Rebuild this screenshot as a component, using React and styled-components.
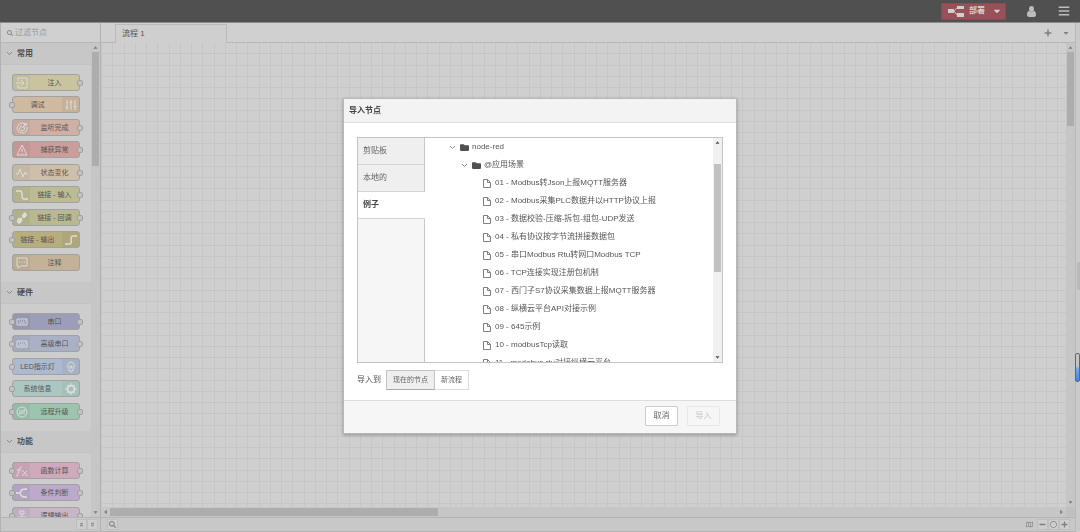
import React from "react";
import styled, { createGlobalStyle } from "styled-components";
import {
  FaAngleDoubleDown,
  FaAngleDoubleUp,
  FaBars,
  FaCaretDown,
  FaFolder,
  FaMinus,
  FaPlus,
  FaRegCircle,
  FaRegMap,
  FaSearch,
} from "react-icons/fa";

const GlobalStyle = createGlobalStyle`
  * {
    box-sizing: border-box;
  }

  body {
    margin: 0;
    overflow: hidden;
  }

  body,
  button,
  input {
    font-family: "Liberation Sans", "Noto Sans CJK SC", sans-serif;
    font-size: 8px;
    line-height: 12px;
    color: #555;
  }

  button,
  input {
    margin: 0;
    padding: 0;
    border: 0;
    background: none;
  }
`;

const Page = styled.div`
  display: flex;
  flex-direction: column;
  height: 100vh;
  background: #c8c8c8;
`;

const Header = styled.header`
  display: flex;
  align-items: center;
  justify-content: flex-end;
  flex: none;
  height: 23px;
  padding-right: 10px;
  background: #505050;
  border-bottom: 1px solid #8c8c8c;
`;

const DeployButton = styled.button`
  display: flex;
  align-items: center;
  width: 65px;
  height: 17px;
  padding: 0 3px 0 6px;
  background: #985059;
  border: 1px solid #8a4a52;
  border-radius: 1px;
  color: #cfcfcf;
  font-weight: bold;

  span {
    flex: 1;
    padding-left: 5px;
    text-align: left;
  }
`;

const HeaderButton = styled.button`
  display: flex;
  justify-content: center;
  width: 12px;
  margin-left: ${(props) => props.$gap || 20}px;
  color: #bdbdbd;
  font-size: 12px;
`;

const Main = styled.div`
  display: flex;
  flex: 1;
  min-height: 0;
`;

const Palette = styled.aside`
  display: flex;
  flex-direction: column;
  flex: none;
  width: 101px;
  border-left: 1px solid #b2b2b2;
  border-right: 1px solid #b2b2b2;
  background: #cdcdcd;
`;

const SearchBox = styled.label`
  display: flex;
  align-items: center;
  gap: 2px;
  flex: none;
  height: 20px;
  padding-left: 6px;
  border-bottom: 1px solid #b8b8b8;
  background: #d0d0d0;
  color: #888;
  font-size: 6px;

  input {
    width: 70px;
    height: 16px;
    outline: 0;
  }

  input::placeholder {
    color: #9a9a9a;
  }
`;

const PaletteScroll = styled.div`
  display: flex;
  flex: 1;
  min-height: 0;
`;

const Categories = styled.div`
  flex: 1;
  overflow: hidden;
`;

const CategoryHeader = styled.button`
  display: flex;
  align-items: center;
  gap: 4px;
  width: 100%;
  height: 22px;
  padding-left: 5px;
  background: #c7c7c7;
  border-bottom: 1px solid #c2c2c2;
  font-weight: ${(props) => (props.$bold ? "bold" : "500")};
  color: #505050;
`;

const NodeList = styled.ul`
  margin: 0;
  padding: 9px 11px 6px;
  list-style: none;
`;

const NodeRow = styled.li`
  height: 22px;

  &:nth-child(even) {
    height: 23px;
  }
`;

const PaletteNode = styled.div`
  position: relative;
  display: flex;
  flex-direction: ${(props) => (props.$iconRight ? "row-reverse" : "row")};
  height: 17px;
  border: 1px solid #a2a2a2;
  border-radius: 3px;
  background: ${(props) => props.$color};
  font-size: 7px;
  line-height: 15px;
  color: #555;

  span {
    flex: 1;
    text-align: center;
    white-space: nowrap;
  }
`;

const NodeIcon = styled.div`
  display: flex;
  align-items: center;
  justify-content: center;
  width: 17px;
  background: rgba(0, 0, 0, 0.04);
`;

const Port = styled.i`
  position: absolute;
  top: 5px;
  left: ${(props) => (props.$right ? "auto" : "-4px")};
  right: ${(props) => (props.$right ? "-4px" : "auto")};
  width: 6px;
  height: 6px;
  border: 1px solid #a0a0a0;
  border-radius: 2px;
  background: #c2c2c2;
`;

const Workspace = styled.main`
  display: flex;
  flex-direction: column;
  flex: 1;
  min-width: 0;
`;

const TabBar = styled.div`
  display: flex;
  align-items: flex-end;
  flex: none;
  height: 20px;
  padding-left: 14px;
  padding-right: 5px;
  border-bottom: 1px solid #b8b8b8;
  background: #d0d0d0;
`;

const FlowTab = styled.button`
  width: 112px;
  height: 19px;
  margin-bottom: -1px;
  padding-left: 6px;
  border: 1px solid #bababa;
  border-bottom: 0;
  background: #cfcfcf;
  text-align: left;
  color: #555;
`;

const TabTools = styled.div`
  display: flex;
  align-items: center;
  gap: 10px;
  height: 19px;
  margin-left: auto;

  button {
    display: flex;
    color: #808080;
  }
`;

const CanvasRow = styled.div`
  display: flex;
  flex: 1;
  min-height: 0;
`;

const line = "#c6c6c6";
const steps = `${line} 0 1px, transparent 1px 11px, ${line} 11px 12px, transparent 12px 23px,
  ${line} 23px 24px, transparent 24px 34px, ${line} 34px 35px, transparent 35px 45px`;

const Canvas = styled.div`
  flex: 1;
  background-color: #cfcfcf;
  background-image: linear-gradient(to right, ${steps}),
    linear-gradient(to bottom, ${steps});
  background-size: 45px 45px;
  background-position: 0 -1px;
`;

const HorizontalScroll = styled.div`
  flex: none;
  padding-right: 9px;
  background: #c0c0c0;
`;

const Track = styled.div`
  display: flex;
  flex: none;
  flex-direction: ${(props) => (props.$horizontal ? "row" : "column")};
  align-items: stretch;
  ${(props) => (props.$horizontal ? "height: 10px" : "width: 9px")};
  padding: ${(props) => (props.$horizontal ? "1px 0" : "0 1px")};
  background: ${(props) => (props.$light ? "#f1f1f1" : "#c6c6c6")};
  color: ${(props) => (props.$light ? "#505050" : "#7a7a7a")};
`;

const Arrow = styled.svg`
  flex: none;
  width: ${(props) => (props.$horizontal ? "9px" : "7px")};
  height: ${(props) => (props.$horizontal ? "8px" : "9px")};
  fill: currentColor;
`;

const Thumb = styled.div`
  flex: none;
  ${(props) => (props.$horizontal ? "width" : "height")}: ${(props) => props.$size}%;
  margin: ${(props) =>
    props.$horizontal ? "0 auto 0 0" : `${props.$start || 0}px 0 auto`};
  background: ${(props) => (props.$light ? "#c1c1c1" : "#adadad")};
`;

const Footer = styled.div`
  display: flex;
  align-items: center;
  justify-content: ${(props) => (props.$end ? "flex-end" : "space-between")};
  flex: none;
  height: 15px;
  padding: ${(props) => (props.$end ? "0 2px" : "0 5px 0 6px")};
  border-top: 1px solid #b4b4b4;
  border-bottom: 1px solid #b4b4b4;
  background: #c8c8c8;
`;

const FooterGroup = styled.div`
  display: flex;
  align-items: center;
  gap: ${(props) => props.$gap || 0}px;
`;

const FooterButton = styled.button`
  display: flex;
  align-items: center;
  justify-content: center;
  width: 11px;
  height: 11px;
  border: 1px solid ${(props) => (props.$plain ? "transparent" : "#bebebe")};
  background: ${(props) => (props.$plain ? "none" : "#cecece")};
  color: #808080;
  font-size: ${(props) => (props.$small ? 5 : 7)}px;
`;

const Separator = styled.div`
  display: flex;
  flex-direction: column;
  align-items: flex-end;
  gap: 63px;
  flex: none;
  width: 5px;
  padding-top: 239px;
  border-left: 1px solid #b9b9b9;
  background: #cacaca;
`;

const Grip = styled.div`
  width: 3px;
  height: 28px;
  border-radius: 1px;
  background: #b9b9b9;
`;

const ScrollPill = styled.div`
  width: 5px;
  height: 29px;
  border: 1px solid #666;
  border-radius: 2px;
  background: linear-gradient(#c4c4c4 45%, #6fa9ea 55%, #3f83ea);
`;

const Shade = styled.div`
  position: fixed;
  inset: 0;
  display: flex;
  align-items: center;
  justify-content: center;
`;

const Dialog = styled.section`
  width: 394px;
  border: 1px solid #b8b8b8;
  background: #fff;
  box-shadow: 0 1px 3px rgba(0, 0, 0, 0.3);
`;

const DialogTitle = styled.h1`
  margin: 0;
  padding: 5px;
  border-bottom: 1px solid #ddd;
  background: #f3f3f3;
  font-size: 8px;
  line-height: 13px;
  color: #444;
`;

const DialogBody = styled.div`
  padding: 14px 13px 10px;
`;

const ImportPanel = styled.div`
  display: flex;
  height: 226px;
  border: 1px solid #c4c4c4;
`;

const SourceTabs = styled.div`
  flex: none;
  width: 67px;
  border-right: 1px solid #c8c8c8;
  background: #f6f6f6;
`;

const SourceTab = styled.button`
  display: block;
  width: ${(props) => (props.$active ? "67px" : "66px")};
  height: 27px;
  padding-left: 5px;
  border-bottom: 1px solid #d4d4d4;
  background: ${(props) => (props.$active ? "#fff" : "#efefef")};
  text-align: left;
  font-weight: ${(props) => (props.$active ? "bold" : "normal")};
  color: ${(props) => (props.$active ? "#444" : "#666")};
`;

const Tree = styled.ul`
  flex: 1;
  margin: 0;
  padding: 0;
  overflow: hidden;
  list-style: none;
`;

const TreeRow = styled.li`
  display: flex;
  align-items: center;
  gap: 3px;
  height: 18px;
  padding-left: ${(props) => [24, 36, 47][props.$level]}px;
  white-space: nowrap;
`;

const Twisty = styled.span`
  display: flex;
  width: 8px;
`;

const TreeIcon = styled.span`
  display: flex;
  width: 9px;
  font-size: 9px;
  color: #505050;
`;

const ImportTarget = styled.div`
  display: flex;
  align-items: center;
  margin-top: 7px;
`;

const TargetButtons = styled.div`
  display: flex;
  margin-left: 5px;
`;

const TargetButton = styled.button`
  height: 20px;
  padding: 0 6px;
  border: 1px solid ${(props) => (props.$selected ? "#c4c4c4" : "#ddd")};
  border-bottom-color: ${(props) => (props.$selected ? "#aaa" : "#ddd")};
  border-left-width: ${(props) => (props.$selected ? "1px" : "0")};
  background: ${(props) => (props.$selected ? "#eee" : "#fff")};
  font-size: 7px;
  color: #666;
`;

const DialogFooter = styled.div`
  display: flex;
  justify-content: flex-end;
  gap: 9px;
  padding: 5px 16px 7px;
  border-top: 1px solid #ddd;
  background: #f6f6f6;
`;

const DialogButton = styled.button`
  width: 33px;
  height: 20px;
  border: 1px solid #ccc;
  border-radius: 1px;
  background: #fff;
  color: #666;

  &:disabled {
    border-color: #e8e8e8;
    background: #f6f6f6;
    color: #c4c4c4;
  }
`;

const glyphs = {
  inject: <path d="M2 4V1h9v10H2V8M0 6h7M5 3l3 3-3 3" />,
  debug: <path d="M2 1v6M2 10v1M6 1v1M6 5v6M10 1v5M10 9v2M1 8h2v1H1zM5 3h2v1H5zM9 7h2v1H9z" />,
  complete: (
    <path d="M9 2a5 5 0 1 0 2 3M8 5a2.500 2.500 0 1 1-2-1M6 6l5-5M9 1v2h2" />
  ),
  catch: <path d="M6 1l5 10H1zM6 5v3M6 9v1" />,
  status: <path d="M0 7h2l2-5 3 8 2-5 1 2h2" />,
  linkIn: <path d="M1 2h3c4 0 0 8 4 8h3M1 1v2M11 9v2" strokeWidth="1.500" />,
  linkCall: (
    <path
      d="M8 1c2-1 3 2 2 3L8 6 6 4zM3 6l3 1c0 3-2 5-4 4-1-1-1-3 1-5zM7 4L4 8"
      fill="#dcdcdc"
    />
  ),
  linkOut: <path d="M1 10h4c3 0-1-8 3-8h3M1 9v2M11 1v2" strokeWidth="1.500" />,
  comment: <path d="M1 1h10v8H5l-3 2V9H1zM3 5h1M5.500 5h1M8 5h1" />,
  serial: <path d="M1 3h10v6H1zM3 5h1M5 5h1M7 5h1M9 5h1M3 7h6" />,
  led: <path d="M6 1a4 4 0 0 0-2 7v2h4V8a4 4 0 0 0-2-7zM5 5h2v2H5zM5 12h2" />,
  gear: (
    <>
      <circle cx="6" cy="6" r="3.500" strokeWidth="2" />
      <path d="M6 0v2M6 10v2M0 6h2M10 6h2M2 2l1 1M9 9l1 1M10 2L9 3M3 9l-1 1" />
    </>
  ),
  upgrade: (
    <>
      <circle cx="6" cy="6" r="5" />
      <path d="M3 5h6L8 3M9 7H3l1 2" />
    </>
  ),
  fx: <path d="M0 11c3 1 2-10 6-9M1 5h4M6 6c3-1 2 6 6 4M11 6l-5 5" />,
  branch: (
    <path
      d="M0 6h4c1-4 3-4 6-4M4 6c1 4 3 4 6 4M1 5v2M10 1v2M10 9v2"
      strokeWidth="1.500"
    />
  ),
  logic: <path d="M4 1h4v3H4zM6 4v3M2 10V7h8v3M1 9h3v2H1zM8 9h3v2H8z" />,
};

const categories = [
  {
    name: "常用",
    bold: true,
    nodes: [
      { label: "注入", icon: "inject", color: "#c9c4a0", output: true },
      { label: "调试", icon: "debug", color: "#cfb99f", input: true, iconRight: true },
      { label: "监听完成", icon: "complete", color: "#cfb0a5", output: true },
      { label: "捕获异常", icon: "catch", color: "#cc9e9b", output: true },
      { label: "状态变化", icon: "status", color: "#cfbfaa", output: true },
      { label: "链接 - 输入", icon: "linkIn", color: "#bbbc94", output: true },
      { label: "链接 - 回调", icon: "linkCall", color: "#b8b891", input: true, output: true },
      { label: "链接 - 输出", icon: "linkOut", color: "#b7ae7f", input: true, iconRight: true },
      { label: "注释", icon: "comment", color: "#c3b297" },
    ],
  },
  {
    name: "硬件",
    bold: true,
    nodes: [
      { label: "串口", icon: "serial", color: "#9c9eb9", input: true, output: true },
      { label: "高级串口", icon: "serial", color: "#abb1c5", input: true, output: true },
      { label: "LED指示灯", icon: "led", color: "#acb9ce", input: true, iconRight: true },
      { label: "系统信息", icon: "gear", color: "#aac8c1", input: true, iconRight: true },
      { label: "远程升级", icon: "upgrade", color: "#9cc4ae", input: true, output: true },
    ],
  },
  {
    name: "功能",
    bold: true,
    nodes: [
      { label: "函数计算", icon: "fx", color: "#cfa9bc", input: true, output: true },
      { label: "条件判断", icon: "branch", color: "#bbaacb", input: true, output: true },
      { label: "逻辑输出", icon: "logic", color: "#c8b5ca", input: true, output: true },
    ],
  },
];

const examples = [
  "01 - Modbus转Json上报MQTT服务器",
  "02 - Modbus采集PLC数据并以HTTP协议上报",
  "03 - 数据校验-压缩-拆包-组包-UDP发送",
  "04 - 私有协议按字节流拼接数据包",
  "05 - 串口Modbus Rtu转网口Modbus TCP",
  "06 - TCP连接实现注册包机制",
  "07 - 西门子S7协议采集数据上报MQTT服务器",
  "08 - 纵横云平台API对接示例",
  "09 - 645示例",
  "10 - modbusTcp读取",
  "11 - modabus rtu对接纵横云平台",
];

const arrowPaths = {
  up: "M2 6h5L4.500 3z",
  down: "M2 3h5L4.500 6z",
  left: "M6 2v5L3 4.500z",
  right: "M3 2v5l3-2.500z",
};

const Scrollbar = ({ horizontal, light, start, size }) => (
  <Track $horizontal={horizontal} $light={light}>
    <Arrow $horizontal={horizontal} viewBox="0 0 9 9">
      <path d={horizontal ? arrowPaths.left : arrowPaths.up} />
    </Arrow>
    <Thumb $horizontal={horizontal} $light={light} $start={start} $size={size} />
    <Arrow $horizontal={horizontal} viewBox="0 0 9 9">
      <path d={horizontal ? arrowPaths.right : arrowPaths.down} />
    </Arrow>
  </Track>
);

const Glyph = ({ name }) => (
  <svg width="12" height="12" viewBox="0 0 12 12" fill="none" stroke="#dcdcdc">
    {glyphs[name]}
  </svg>
);

const Chevron = () => (
  <svg width="7" height="7" viewBox="0 0 7 7" fill="none" stroke="#888">
    <path d="M1 2l2.500 2.500L6 2" />
  </svg>
);

const DeployIcon = () => (
  <svg width="16" height="11" viewBox="0 0 16 11" fill="#cfcfcf">
    <path d="M0 3h6v4H0zM9 0h7v3H9zM9 7h7v4H9z" />
    <path d="M5 5c3 0 2-3 5-3M5 5c3 0 2 4 5 4" fill="none" stroke="#cfcfcf" />
  </svg>
);

const UserIcon = () => (
  <svg width="9" height="11" viewBox="0 0 9 11" fill="currentColor">
    <ellipse cx="4.500" cy="3" rx="2.500" ry="3" />
    <path d="M2 5c-1.500 0-2 2-2 4 0 1 1 2 2 2h5c1 0 2-1 2-2 0-2-.5-4-2-4-1.500 1.500-3.500 1.500-5 0z" />
  </svg>
);

const FileIcon = () => (
  <svg width="8" height="9" viewBox="0 0 8 9" fill="none" stroke="#808080">
    <path d="M.5.5h4l3 3v5h-7zM4.500.5v3h3" />
  </svg>
);

const App = () => {
  return (
    <Page>
      <GlobalStyle />
      <Header>
        <DeployButton>
          <DeployIcon />
          <span>部署</span>
          <FaCaretDown size={10} />
        </DeployButton>
        <HeaderButton $gap={19} aria-label="用户">
          <UserIcon />
        </HeaderButton>
        <HeaderButton $gap={21} aria-label="菜单">
          <FaBars />
        </HeaderButton>
      </Header>

      <Main>
        <Palette>
          <SearchBox>
            <FaSearch />
            <input type="text" placeholder="过滤节点" />
          </SearchBox>
          <PaletteScroll>
            <Categories>
              {categories.map((category) => (
                <section key={category.name}>
                  <CategoryHeader $bold={category.bold}>
                    <Chevron />
                    {category.name}
                  </CategoryHeader>
                  <NodeList>
                    {category.nodes.map((node) => (
                      <NodeRow key={node.label}>
                        <PaletteNode $color={node.color} $iconRight={node.iconRight}>
                          <NodeIcon>
                            <Glyph name={node.icon} />
                          </NodeIcon>
                          <span>{node.label}</span>
                          {node.input && <Port />}
                          {node.output && <Port $right />}
                        </PaletteNode>
                      </NodeRow>
                    ))}
                  </NodeList>
                </section>
              ))}
            </Categories>
            <Scrollbar size={24} />
          </PaletteScroll>
          <Footer $end>
            <FooterButton $small aria-label="全部折叠">
              <FaAngleDoubleUp />
            </FooterButton>
            <FooterButton $small aria-label="全部展开">
              <FaAngleDoubleDown />
            </FooterButton>
          </Footer>
        </Palette>

        <Workspace>
          <TabBar>
            <FlowTab>流程 1</FlowTab>
            <TabTools>
              <button aria-label="新增流程">
                <FaPlus />
              </button>
              <button aria-label="流程列表">
                <FaCaretDown />
              </button>
            </TabTools>
          </TabBar>
          <CanvasRow>
            <Canvas />
            <Scrollbar size={16} />
          </CanvasRow>
          <HorizontalScroll>
            <Scrollbar horizontal size={34} />
          </HorizontalScroll>
          <Footer>
            <FooterButton aria-label="搜索">
              <FaSearch />
            </FooterButton>
            <FooterGroup $gap={2}>
              <FooterButton $plain aria-label="导航">
                <FaRegMap />
              </FooterButton>
              <FooterGroup>
                <FooterButton aria-label="缩小">
                  <FaMinus />
                </FooterButton>
                <FooterButton aria-label="重置">
                  <FaRegCircle />
                </FooterButton>
                <FooterButton aria-label="放大">
                  <FaPlus />
                </FooterButton>
              </FooterGroup>
            </FooterGroup>
          </Footer>
        </Workspace>

        <Separator>
          <Grip />
          <ScrollPill />
        </Separator>
      </Main>

      <Shade>
        <Dialog role="dialog" aria-labelledby="import-title">
          <DialogTitle id="import-title">导入节点</DialogTitle>
          <DialogBody>
            <ImportPanel>
              <SourceTabs>
                <SourceTab>剪贴板</SourceTab>
                <SourceTab>本地的</SourceTab>
                <SourceTab $active>例子</SourceTab>
              </SourceTabs>
              <Tree>
                <TreeRow $level={0}>
                  <Twisty>
                    <Chevron />
                  </Twisty>
                  <TreeIcon>
                    <FaFolder />
                  </TreeIcon>
                  node-red
                </TreeRow>
                <TreeRow $level={1}>
                  <Twisty>
                    <Chevron />
                  </Twisty>
                  <TreeIcon>
                    <FaFolder />
                  </TreeIcon>
                  @应用场景
                </TreeRow>
                {examples.map((example) => (
                  <TreeRow key={example} $level={2}>
                    <Twisty />
                    <TreeIcon>
                      <FileIcon />
                    </TreeIcon>
                    {example}
                  </TreeRow>
                ))}
              </Tree>
              <Scrollbar light start={17} size={48} />
            </ImportPanel>
            <ImportTarget>
              导入到
              <TargetButtons>
                <TargetButton $selected>现在的节点</TargetButton>
                <TargetButton>新流程</TargetButton>
              </TargetButtons>
            </ImportTarget>
          </DialogBody>
          <DialogFooter>
            <DialogButton>取消</DialogButton>
            <DialogButton disabled>导入</DialogButton>
          </DialogFooter>
        </Dialog>
      </Shade>
    </Page>
  );
};

export default App;
